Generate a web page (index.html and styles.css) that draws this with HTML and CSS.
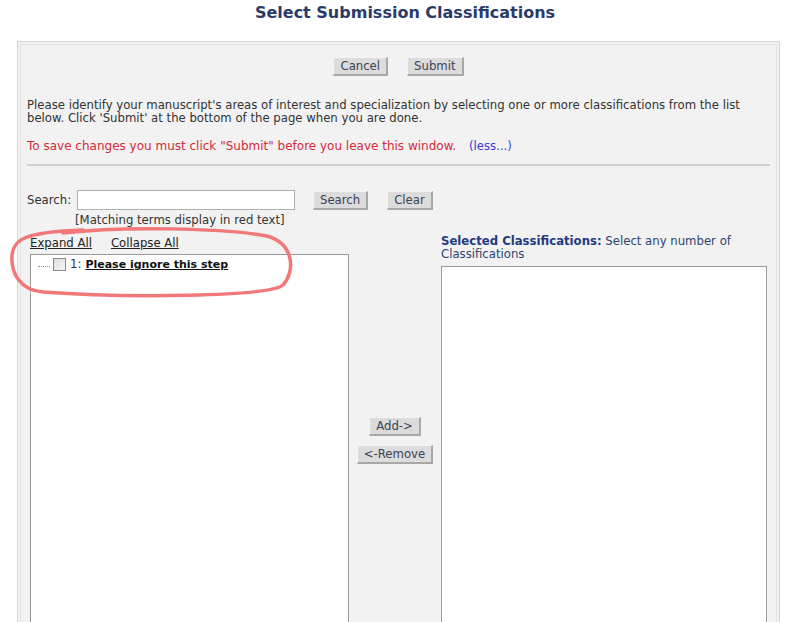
FILE: index.html
```html
<!DOCTYPE html>
<html>
<head>
<meta charset="utf-8">
<link rel="stylesheet" href="styles.css">
</head>
<body>
<h1 class="title">Select Submission Classifications</h1>
<div class="panel">
  <div class="top-buttons">
    <span class="btn">Cancel</span>
    <span class="btn">Submit</span>
  </div>
  <p class="intro">Please identify your manuscript's areas of interest and specialization by selecting one or more classifications from the list below. Click 'Submit' at the bottom of the page when you are done.</p>
  <p class="warn">To save changes you must click "Submit" before you leave this window. <span class="less">(less...)</span></p>
  <div class="rule"></div>
  <div class="search-row">
    <span class="search-label">Search:</span>
    <span class="search-input"></span>
    <span class="btn btn-search">Search</span>
    <span class="btn btn-clear">Clear</span>
  </div>
  <div class="hint">[Matching terms display in red text]</div>
  <div class="picker">
    <div class="col-left">
      <div class="links"><span class="link">Expand All</span><span class="link">Collapse All</span></div>
      <div class="box tree">
        <div class="node">
          <span class="dots"></span>
          <span class="check"></span>
          <span class="num">1:</span>
          <span class="node-label">Please ignore this step</span>
        </div>
      </div>
    </div>
    <div class="col-mid">
      <span class="btn btn-add">Add-&gt;</span>
      <span class="btn btn-remove">&lt;-Remove</span>
    </div>
    <div class="col-right">
      <div class="sel-label"><b>Selected Classifications:</b> <span>Select any number of</span><br><span>Classifications</span></div>
      <div class="box selected"></div>
    </div>
  </div>
</div>
<svg class="annot" width="300" height="80" viewBox="0 0 300 80">
  <path d="M 60 13 C 120 6, 220 8, 264 16 C 292 24, 292 52, 280 65 C 266 77, 120 78, 40 72 C 16 70, 8 52, 9 36 C 10 20, 20 12, 80 10" fill="none" stroke="#f07878" stroke-width="3.5" stroke-linecap="round"/>
</svg>
</body>
</html>
```
FILE: styles.css
```css
html, body {
  margin: 0;
  padding: 0;
  background: #fff;
  font-family: "DejaVu Sans", Verdana, sans-serif;
  font-size: 11.7px;
  color: #333;
  overflow: hidden;
  height: 622px;
}
.title {
  margin: 4px 0 0 10px;
  font-size: 16px;
  font-weight: bold;
  color: #2b3a68;
  text-align: center;
  line-height: 18px;
}
.panel {
  margin: 19px 0 0 17px;
  width: 763px;
  height: 640px;
  border: 1px solid #d4d4d4;
  box-shadow: inset 0 0 0 2px #f2f2f2, inset 0 0 0 3px #e2e2e2;
  background: #f2f2f2;
  padding: 0 9px;
  box-sizing: border-box;
  position: relative;
}
.btn {
  display: inline-block;
  background: #dcdcdc;
  border-top: 1px solid #f4f4f4;
  border-left: 1px solid #f4f4f4;
  border-right: 2px solid #a8a8a8;
  border-bottom: 2px solid #a8a8a8;
  color: #3a4256;
  font-size: 11.7px;
  line-height: 15px;
  padding: 1px 6px 0;
}
.top-buttons {
  padding-top: 15px;
  display: flex;
  justify-content: center;
  gap: 19px;
  margin-left: 0;
}
.intro {
  margin: 23px 0 0;
  line-height: 13px;
}
.warn {
  margin: 15px 0 0;
  color: #d42a3a;
  font-size: 12px;
  line-height: 13px;
}
.less {
  color: #3b3bd0;
  font-size: 11.7px;
  margin-left: 9px;
}
.rule {
  margin: 11px 0 0;
  height: 0;
  border-top: 2px solid #d0d0d0;
}
.search-row {
  display: flex;
  align-items: center;
  margin-top: 24px;
}
.search-label {
  width: 50px;
}
.search-input {
  width: 216px;
  height: 18px;
  background: #fff;
  border: 1px solid #b0b0b0;
}
.btn-search {
  margin-left: 18px;
}
.btn-clear {
  margin-left: 19px;
}
.hint {
  margin: 3px 0 0 48px;
  line-height: 14px;
}
.picker {
  display: grid;
  grid-template-columns: 319px 92px 326px;
  margin: 0 0 0 3px;
}
.links {
  line-height: 14px;
  margin-top: 9px;
  height: 18px;
}
.link {
  text-decoration: underline;
  color: #222;
  margin-right: 19px;
}
.box {
  background: #fff;
  border: 1px solid #9a9a9a;
  height: 420px;
}
.node {
  display: flex;
  align-items: center;
  margin-top: 2px;
  height: 14px;
}
.dots {
  width: 12px;
  margin-left: 7px;
  border-bottom: 1px dotted #999;
  margin-top: 5px;
}
.check {
  width: 11px;
  height: 11px;
  border: 1px solid #8a8a8a;
  background: linear-gradient(135deg, #ddd, #f6f6f6);
  margin-left: 3px;
}
.num {
  margin-left: 4px;
}
.node-label {
  margin-left: 4px;
  font-size: 11px;
  font-weight: bold;
  text-decoration: underline;
  color: #111;
}
.col-mid {
  display: flex;
  flex-direction: column;
  align-items: center;
  padding-top: 190px;
  gap: 9px;
}
.sel-label {
  margin-top: 8px;
  color: #2d4470;
  line-height: 13px;
  height: 31px;
}
.sel-label b {
  color: #1f3a80;
}
.annot {
  position: absolute;
  left: 3px;
  top: 220px;
}
```
